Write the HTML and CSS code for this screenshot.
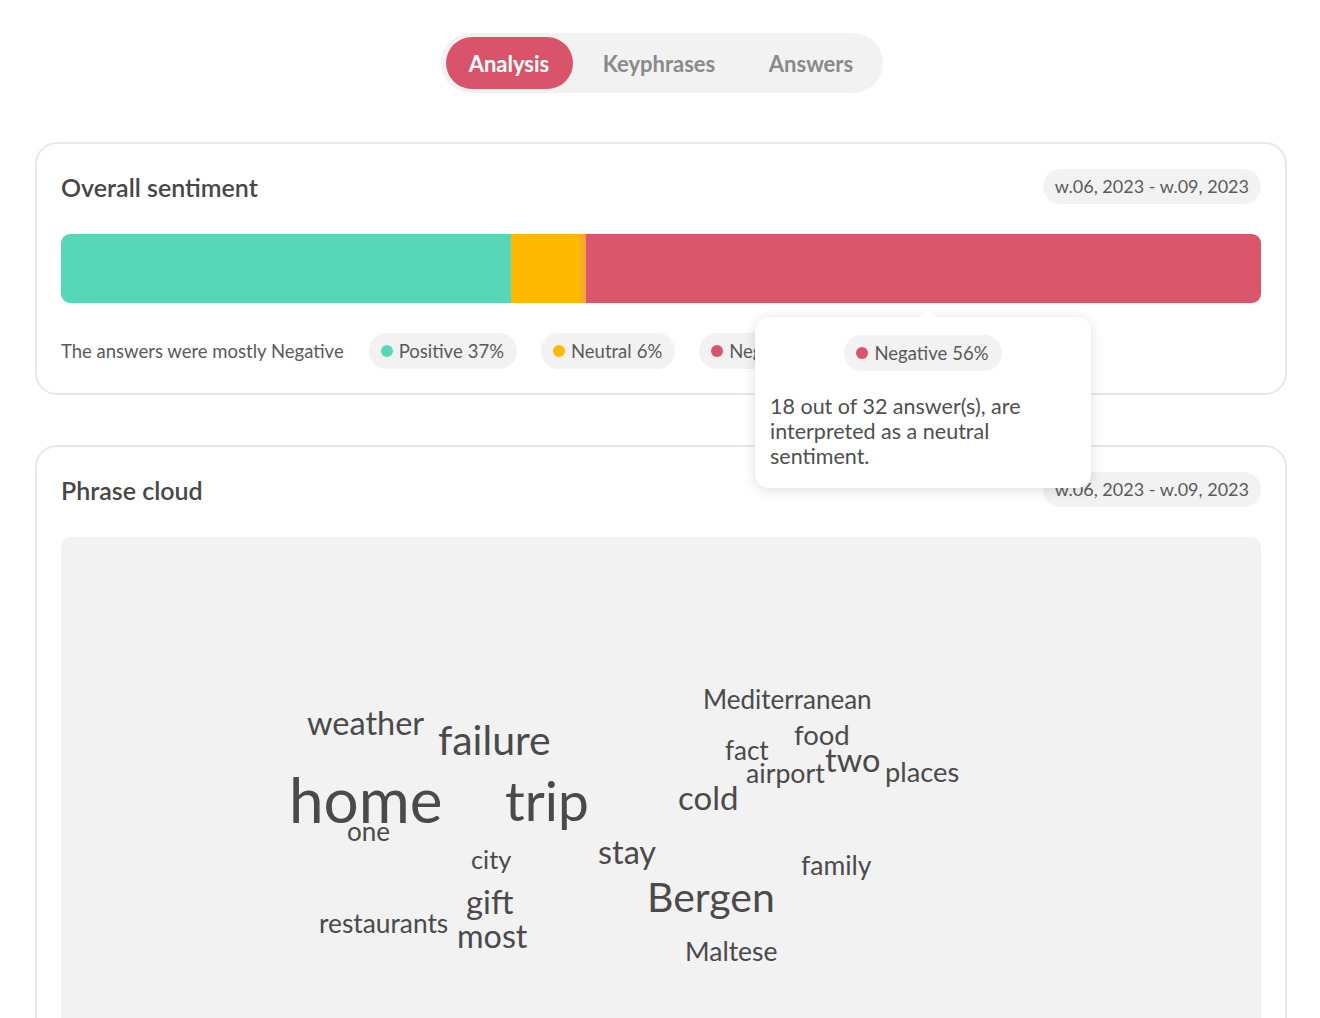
FILE: index.html
```html
<!DOCTYPE html>
<html lang="en">
<head>
<meta charset="utf-8">
<title>Analysis</title>
<link rel="stylesheet" href="styles.css">
</head>
<body>
<div class="page">
  <nav class="tabs">
    <button class="tab tab-analysis active">Analysis</button>
    <button class="tab tab-keyphrases">Keyphrases</button>
    <button class="tab tab-answers">Answers</button>
  </nav>

  <section class="card card-sentiment">
    <header class="card-head">
      <h2 class="card-title">Overall sentiment</h2>
      <span class="date-pill">w.06, 2023 - w.09, 2023</span>
    </header>
    <div class="bar">
      <div class="seg seg-pos"></div>
      <div class="seg seg-neu"></div>
      <div class="seg seg-neg"></div>
    </div>
    <div class="legend">
      <span class="legend-text">The answers were mostly Negative</span>
      <span class="pill"><i class="dot dot-pos"></i>Positive <span class="pct">37%</span></span>
      <span class="pill"><i class="dot dot-neu"></i>Neutral <span class="pct">6%</span></span>
      <span class="pill"><i class="dot dot-neg"></i>Negative <span class="pct">56%</span></span>
    </div>
    <div class="tooltip">
      <div class="tooltip-pill-row">
        <span class="pill"><i class="dot dot-neg"></i>Negative <span class="pct">56%</span></span>
      </div>
      <p class="tooltip-text">18 out of 32 answer(s), are<br>interpreted as a neutral<br>sentiment.</p>
    </div>
  </section>

  <section class="card card-cloud">
    <header class="card-head">
      <h2 class="card-title">Phrase cloud</h2>
      <span class="date-pill">w.06, 2023 - w.09, 2023</span>
    </header>
    <div class="cloud">
      <span class="word" style="--x:246px;--b:197px;--s:32.5px">weather</span>
      <span class="word" style="--x:377px;--b:216px;--s:41px">failure</span>
      <span class="word" style="--x:228px;--b:284px;--s:62px">home</span>
      <span class="word" style="--x:444px;--b:283px;--s:55px">trip</span>
      <span class="word" style="--x:286px;--b:302px;--s:26px">one</span>
      <span class="word" style="--x:642px;--b:170px;--s:26px">Mediterranean</span>
      <span class="word" style="--x:733px;--b:206px;--s:27.5px">food</span>
      <span class="word" style="--x:664px;--b:221px;--s:26px">fact</span>
      <span class="word" style="--x:685px;--b:245px;--s:26.7px">airport</span>
      <span class="word" style="--x:764px;--b:234px;--s:32.5px">two</span>
      <span class="word" style="--x:824px;--b:243px;--s:27.3px">places</span>
      <span class="word" style="--x:617px;--b:271px;--s:33px">cold</span>
      <span class="word" style="--x:410px;--b:330px;--s:25.3px">city</span>
      <span class="word" style="--x:537px;--b:326px;--s:32.4px">stay</span>
      <span class="word" style="--x:586px;--b:373px;--s:41px">Bergen</span>
      <span class="word" style="--x:740px;--b:337px;--s:26.5px">family</span>
      <span class="word" style="--x:405px;--b:376px;--s:32.8px">gift</span>
      <span class="word" style="--x:258px;--b:394px;--s:26.3px">restaurants</span>
      <span class="word" style="--x:396px;--b:410px;--s:32.3px">most</span>
      <span class="word" style="--x:624px;--b:423px;--s:26.5px">Maltese</span>
    </div>
  </section>
</div>
</body>
</html>
```

FILE: styles.css
```css
* { box-sizing: border-box; }
html, body { margin: 0; padding: 0; background: #fff; }
body {
  font-family: Lato, "Open Sans", sans-serif;
  color: #4a4a4a;
}
.page {
  padding: 33px 33px 0 35px;
  display: flex;
  flex-direction: column;
  align-items: stretch;
}
.tabs {
  align-self: center;
  display: flex;
  gap: 6px;
  padding: 4px 6px 4px 5px;
  background: #f2f2f2;
  border-radius: 30px;
  margin-left: 1px;
}
.tab {
  border: 0;
  background: transparent;
  height: 52px;
  border-radius: 26px;
  font-family: inherit;
  font-size: 22px;
  font-weight: 700;
  color: #8a8a8a;
  padding: 0;
  cursor: pointer;
}
.tab-analysis { width: 127px; }
.tab-keyphrases { width: 161px; }
.tab-answers { width: 131px; }
.tab.active { background: #d9546b; color: #fff; }

.card {
  position: relative;
  border: 2px solid #e8e8e8;
  border-radius: 22px;
  padding: 25px 24px 24px;
  background: #fff;
}
.card-sentiment { margin-top: 49px; }
.card-cloud { margin-top: 50px; padding-bottom: 40px; }
.card-head {
  display: flex;
  justify-content: space-between;
  align-items: center;
  height: 35px;
}
.card-title {
  margin: 0;
  font-size: 25px;
  font-weight: 600;
  color: #474747;
}
.date-pill {
  height: 35px;
  line-height: 35px;
  padding: 0 12px;
  border-radius: 18px;
  background: #f2f2f2;
  color: #5a5a5a;
  font-size: 18px;
}
.bar {
  margin-top: 30px;
  height: 69px;
  border-radius: 9px;
  overflow: hidden;
  display: flex;
}
.seg-pos { width: 37.5%; background: #56d8b8; }
.seg-neu { width: 6.25%; background: linear-gradient(to right, #ffba00 0%, #ffba00 88%, #eea43c 100%); }
.seg-neg { flex: 1; background: #d9566c; }

.legend {
  margin-top: 30px;
  display: flex;
  align-items: center;
  gap: 24px;
  height: 36px;
}
.legend-text { font-size: 18.5px; color: #5a5a5a; margin-right: 1px; }
.pill {
  display: inline-flex;
  align-items: center;
  height: 36px;
  padding: 0 13px 0 12px;
  border-radius: 18px;
  background: #f2f2f2;
  color: #5a5a5a;
  font-size: 18.5px;
  white-space: nowrap;
}
.pct { margin-left: 5px; }
.dot {
  width: 12px;
  height: 12px;
  border-radius: 50%;
  margin-right: 6px;
  display: inline-block;
}
.dot-pos { background: #56d8b8; }
.dot-neu { background: #ffba00; }
.dot-neg { background: #d9546b; }

.tooltip {
  position: absolute;
  left: 718px;
  top: 173px;
  width: 336px;
  height: 171px;
  background: #fff;
  border-radius: 14px;
  box-shadow: 0 2px 14px rgba(0, 0, 0, 0.13);
  padding: 18px 15px;
  z-index: 5;
}
.tooltip::before {
  content: "";
  position: absolute;
  left: 164px;
  top: -8px;
  width: 0;
  height: 0;
  border-left: 9px solid transparent;
  border-right: 9px solid transparent;
  border-bottom: 9px solid #fff;
}
.tooltip-pill-row { display: flex; justify-content: center; }
.tooltip-text {
  margin: 23px 0 0;
  font-size: 21.5px;
  line-height: 25px;
  color: #4f4f4f;
}

.cloud {
  position: relative;
  margin-top: 30px;
  height: 520px;
  background: #f2f2f2;
  border-radius: 10px;
}
.word {
  position: absolute;
  left: var(--x);
  top: calc(var(--b) + 2px - 0.887 * var(--s));
  font-size: var(--s);
  line-height: 1;
  color: #4a4a4a;
  white-space: nowrap;
}
```
